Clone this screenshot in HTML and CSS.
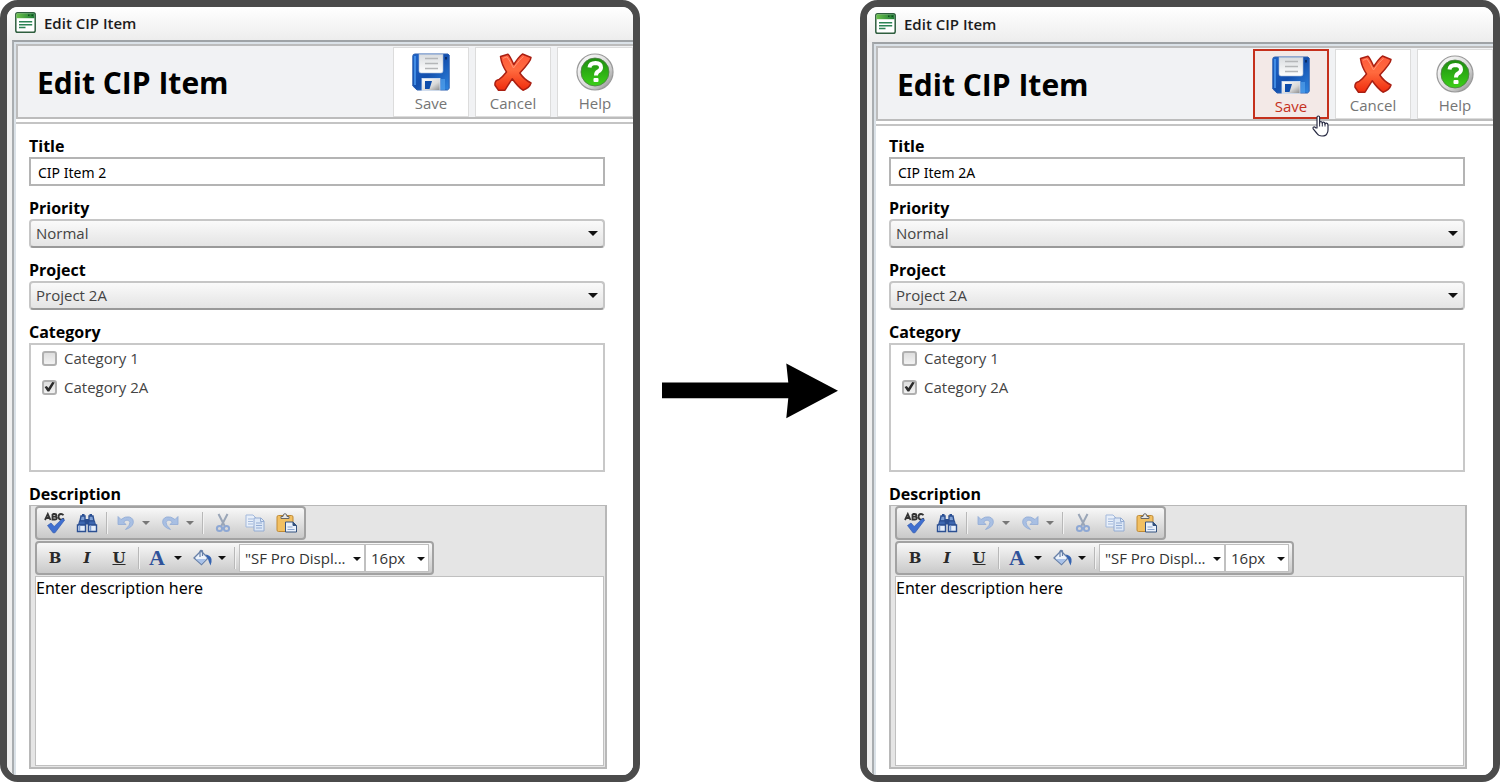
FILE: index.html
```html
<!DOCTYPE html>
<html lang="en">
<head>
<meta charset="UTF-8">
<meta name="viewport" content="width=device-width, initial-scale=1.0">
<title>Edit CIP Item</title>
<link rel="stylesheet" href="styles.css">
</head>
<body>

<!-- shared icons -->
<svg class="sprite" width="0" height="0" aria-hidden="true">
  <defs>
    <linearGradient id="g-blue" x1="0" y1="0" x2="1" y2="1">
      <stop offset="0" stop-color="#1d62c8"/><stop offset="0.5" stop-color="#1450ae"/><stop offset="1" stop-color="#2f86e0"/>
    </linearGradient>
    <linearGradient id="g-paper" x1="0" y1="0" x2="0" y2="1">
      <stop offset="0" stop-color="#d9dcdf"/><stop offset="1" stop-color="#ffffff"/>
    </linearGradient>
    <linearGradient id="g-metal" x1="0" y1="0" x2="1" y2="1">
      <stop offset="0" stop-color="#ffffff"/><stop offset="0.6" stop-color="#d8d8d8"/><stop offset="1" stop-color="#888888"/>
    </linearGradient>
    <linearGradient id="g-red" x1="0" y1="0" x2="0" y2="1">
      <stop offset="0" stop-color="#ff5a3c"/><stop offset="0.45" stop-color="#ff6a3e"/><stop offset="1" stop-color="#f02c0c"/>
    </linearGradient>
    <linearGradient id="g-green" x1="0" y1="0" x2="0" y2="1">
      <stop offset="0" stop-color="#1e8c10"/><stop offset="1" stop-color="#3cd018"/>
    </linearGradient>
    <linearGradient id="g-bar" x1="0" y1="0" x2="1" y2="0">
      <stop offset="0" stop-color="#6cc24c"/><stop offset="1" stop-color="#1c7a34"/>
    </linearGradient>
  </defs>

  <symbol id="i-form" viewBox="0 0 21 21">
    <rect x="0.8" y="0.8" width="19.4" height="19.4" rx="1.8" fill="#fff" stroke="#2f5e3e" stroke-width="1.5"/>
    <rect x="1.5" y="1.4" width="18" height="4.8" fill="url(#g-bar)"/>
    <path d="M13 3.2h1.5M16.5 3.2h1.5" stroke="#104a20" stroke-width="1.5"/>
    <path d="M4 9.8h13.2M4 12.7h13.2M4 15.6h6.5" stroke="#2c8455" stroke-width="1.5"/>
  </symbol>

  <symbol id="i-save" viewBox="0 0 38 38">
    <path d="M3 1h33l1.2 1.2v33.3L35.5 37H5L.8 33V3Q.8 1 3 1z" fill="url(#g-blue)" stroke="#2a5fb0"/>
    <path d="M3 3v29" stroke="#4f9cf0" stroke-width="1.5"/>
    <path d="M7 1.2h24V18q0 2-2 2H9q-2 0-2-2z" fill="url(#g-paper)" stroke="#a8bcd8" stroke-width="0.6"/>
    <path d="M13 5.5h13M13 10.5h13M13 15.5h13" stroke="#b4b6b8" stroke-width="1.5"/>
    <rect x="33" y="4" width="2" height="2.5" fill="#082c66"/>
    <rect x="10" y="25.500" width="18" height="12" fill="url(#g-metal)" stroke="#d8e4f4" stroke-width="0.8"/>
    <path d="M13 28h7l-2.500 8H13z" fill="#0d4cab"/>
    <path d="M29 26v11h4V26z" fill="#5aa8f0" opacity="0.6"/>
  </symbol>

  <symbol id="i-cancel" viewBox="0 0 38 38">
    <path d="M6.5 3.5 14 1.2Q16 3 19.8 11.5 24.5 4 28.5 1L37 4.5Q37 8 25.8 20 30 26.5 37 30q-1.500 5-8 7.200-4.800-3-10.800-11.400Q14 32 11 37.200H4.500L1 32.200Q.4 27.500 5 26.500 9 23.500 12.500 19 7.500 11.500 6.500 3.500z" fill="url(#g-red)" stroke="#a91f12" stroke-width="1.500" stroke-linejoin="round"/>
    <path d="M9 5.300 13 3.800Q15.500 7 19.500 15 26 6 29.500 3.500" fill="none" stroke="#ff9474" stroke-width="1"/>
  </symbol>

  <symbol id="i-help" viewBox="0 0 38 38">
    <circle cx="19" cy="19" r="18" fill="url(#g-metal)" stroke="#9a9a9a" stroke-width="1.200"/>
    <circle cx="19" cy="19" r="14" fill="url(#g-green)" stroke="#4f7a48" stroke-width="0.800"/>
    <path d="M13.500 14.500q.5-4.500 6-4.500 5.500.3 5.500 4.500 0 2.500-3 4-2 1.200-2 4" fill="none" stroke="#fff" stroke-width="4"/>
    <rect x="17.500" y="25" width="5" height="4" rx="1" fill="#fff"/>
  </symbol>

  <symbol id="i-hand" viewBox="0 0 17 22">
    <path d="M5 13V2.500Q5 1 6.300 1T7.600 2.500V8.200Q7.700 6.500 9 6.600t1.300 1.800Q10.500 7 11.700 7.200T13 9.200q.2-1.200 1.500-1 1.500.2 1.500 2V15q0 2-1 3.500-.8 2.500-5 2.500-3.500 0-5-2.500L1.200 13.800Q.6 12.300 1.800 12q1-.2 2 .9z" fill="#fff" stroke="#2a2d45" stroke-width="1.200" stroke-linejoin="round"/>
    <path d="M7.600 8v3.500M10.300 8.500v3M13 9v2.500" stroke="#2a2d45" stroke-width="1"/>
  </symbol>

  <symbol id="i-spell" viewBox="0 0 22 22">
    <path d="M1 8 3.800 2 6.500 8M2 6h3.700M8.500 2V7.500h2.300Q13 7.300 12.800 5.800 12.700 4.700 11 4.700H8.500M8.500 2h2.200q1.700 0 1.700 1.300t-1.500 1.400M19.500 3.200Q18.500 1.900 16.900 2 14.500 2.200 14.500 4.800q.1 2.700 2.600 2.800Q18.800 7.500 19.800 6.300" fill="none" stroke="#333" stroke-width="1.800"/>
    <path d="M3.500 13.500 7 11l3.200 3.500L18.500 6.500l2.200 1.500L11 20.800H9z" fill="#3f6fd0" stroke="#2c54a8" stroke-width="0.600"/>
  </symbol>

  <symbol id="i-find" viewBox="0 0 22 20">
    <path d="M5 3h4v5H4zM13 3h4l1 5h-5z" fill="#7fa0d4" stroke="#2b4f92" stroke-width="1.400"/>
    <path d="M6 1h2.500v2H6zM13.500 1H16v2h-2.500z" fill="#2b4f92"/>
    <rect x="9" y="6" width="4" height="5.500" fill="#2b4f92"/>
    <path d="M3.500 8H9l.5 4H2.500zM13 8h5.500l1 4h-7z" fill="#3d67b0" stroke="#2b4f92"/>
    <path d="M1.500 12h8v6.500h-8zM12.500 12h8v6.500h-8z" fill="#e4edfa" stroke="#2b4f92" stroke-width="1.400"/>
    <path d="M3.500 12.500v5.500M14.500 12.500v5.500" stroke="#7fa0d4" stroke-width="1.500"/>
  </symbol>

  <symbol id="i-undo" viewBox="0 0 18 18">
    <path d="M1 2.500V10.500H9L6.600 8Q9 5.500 11.300 6.300 14 7.800 12.200 11.200L8.500 15.500Q15 13.500 16.200 9.200 17 4.500 12.500 3 8 2 4 5.500z" fill="#a8bfe3" stroke="#91abd6" stroke-width="0.800"/>
  </symbol>

  <symbol id="i-cut" viewBox="0 0 16 20">
    <path d="M3.500 1 9.700 13M12.500 1 6.300 13" stroke="#9aa6b8" stroke-width="2"/>
    <circle cx="4.500" cy="15.500" r="2.600" fill="none" stroke="#8ea8d4" stroke-width="2"/>
    <circle cx="11.500" cy="15.500" r="2.600" fill="none" stroke="#8ea8d4" stroke-width="2"/>
  </symbol>

  <symbol id="i-copy" viewBox="0 0 20 18">
    <path d="M1 1h7l3 3v9H1z" fill="#e8eff9" stroke="#a3b9dc"/>
    <path d="M3 5h5M3 7.500h5M3 10h5" stroke="#a3b9dc"/>
    <path d="M9 4h7l3 3v10H9z" fill="#dce7f6" stroke="#93abd2"/>
    <path d="M15.500 4v3.500H19M11 9h6M11 11.500h6M11 14h6" fill="none" stroke="#93abd2"/>
  </symbol>

  <symbol id="i-paste" viewBox="0 0 22 20">
    <rect x="1" y="2.500" width="16" height="16" rx="1.500" fill="#f2c062" stroke="#c08a34"/>
    <path d="M5 5.500V3.500h2Q7 .7 9 .7t2 2.800h2v2z" fill="#e8e8e8" stroke="#666"/>
    <path d="M9.500 9H17l3.500 3.500V19h-11z" fill="#eaf1fb" stroke="#34527f"/>
    <path d="M17 9v3.500h3.500" fill="#34527f" stroke="#34527f"/>
    <path d="M11.500 14h5M11.500 16.500h7" stroke="#8ba6d0"/>
  </symbol>

  <symbol id="i-fill" viewBox="0 0 20 18">
    <path d="M8 2 15 9 8.500 15.500 1 9z" fill="#edf3fb" stroke="#6780a8" stroke-width="1.300"/>
    <path d="M3 10h10.500l-5 5z" fill="#a8c1e8"/>
    <path d="M7 8V2.500Q7.500.5 9.500 1.800V7" fill="none" stroke="#6780a8" stroke-width="1.200"/>
    <path d="M12.500 5.500q5 .5 6 4.500.5 3-1 6.500-1.500-3-2.500-6.500z" fill="#3764b0"/>
  </symbol>
</svg>

<div class="page">

  <section class="window">
    <div class="title-bar">
      <svg class="form-icon"><use href="#i-form"/></svg>
      <span>Edit CIP Item</span>
    </div>
    <div class="frame">
      <header class="header">
        <h1>Edit CIP Item</h1>
        <div class="actions">
          <button type="button" class="action"><svg><use href="#i-save"/></svg>Save</button>
          <button type="button" class="action"><svg><use href="#i-cancel"/></svg>Cancel</button>
          <button type="button" class="action"><svg><use href="#i-help"/></svg>Help</button>
        </div>
      </header>
      <form class="form">
        <div class="field">
          <label for="title-1">Title</label>
          <input class="text-input" id="title-1" type="text" value="CIP Item 2">
        </div>
        <div class="field">
          <label for="priority-1">Priority</label>
          <div class="dropdown">
            <select id="priority-1"><option>Normal</option></select>
          </div>
        </div>
        <div class="field">
          <label for="project-1">Project</label>
          <div class="dropdown">
            <select id="project-1"><option>Project 2A</option></select>
          </div>
        </div>
        <fieldset class="field">
          <legend>Category</legend>
          <div class="category-list">
            <label><input type="checkbox"> Category 1</label>
            <label><input type="checkbox" checked> Category 2A</label>
          </div>
        </fieldset>
        <div class="field field-editor">
          <label for="description-1">Description</label>
          <div class="editor">
            <div class="toolbar">
              <button type="button" class="tool" aria-label="Spell check"><svg width="22" height="22"><use href="#i-spell"/></svg></button>
              <button type="button" class="tool" aria-label="Find"><svg width="22" height="20"><use href="#i-find"/></svg></button>
              <span class="separator"></span>
              <button type="button" class="tool tool-split disabled" aria-label="Undo"><svg width="18" height="18"><use href="#i-undo"/></svg><i class="caret"></i></button>
              <button type="button" class="tool tool-split disabled" aria-label="Redo"><svg class="flip" width="18" height="18"><use href="#i-undo"/></svg><i class="caret"></i></button>
              <span class="separator"></span>
              <button type="button" class="tool" aria-label="Cut"><svg width="16" height="20"><use href="#i-cut"/></svg></button>
              <button type="button" class="tool" aria-label="Copy"><svg width="20" height="18"><use href="#i-copy"/></svg></button>
              <button type="button" class="tool" aria-label="Paste"><svg width="22" height="20"><use href="#i-paste"/></svg></button>
            </div>
            <div class="toolbar">
              <button type="button" class="tool letter">B</button>
              <button type="button" class="tool letter italic">I</button>
              <button type="button" class="tool letter underline">U</button>
              <span class="separator"></span>
              <button type="button" class="tool tool-split letter color">A<i class="caret"></i></button>
              <button type="button" class="tool tool-split" aria-label="Background color"><svg width="20" height="18"><use href="#i-fill"/></svg><i class="caret"></i></button>
              <span class="separator"></span>
              <div class="tool-select font-name"><select aria-label="Font name"><option>"SF Pro Displ...</option></select></div>
              <div class="tool-select font-size"><select aria-label="Font size"><option>16px</option></select></div>
            </div>
            <textarea id="description-1">Enter description here</textarea>
          </div>
        </div>
      </form>
    </div>
  </section>

  <svg class="arrow" viewBox="0 0 177 56">
    <path d="M0 19.500H127L125 .5 177 28 125 55.500 127 35.500H0z"/>
  </svg>

  <section class="window window-after">
    <div class="title-bar">
      <svg class="form-icon"><use href="#i-form"/></svg>
      <span>Edit CIP Item</span>
    </div>
    <div class="frame">
      <header class="header">
        <h1>Edit CIP Item</h1>
        <div class="actions">
          <button type="button" class="action active"><svg><use href="#i-save"/></svg>Save<svg class="pointer"><use href="#i-hand"/></svg></button>
          <button type="button" class="action"><svg><use href="#i-cancel"/></svg>Cancel</button>
          <button type="button" class="action"><svg><use href="#i-help"/></svg>Help</button>
        </div>
      </header>
      <form class="form">
        <div class="field">
          <label for="title-2">Title</label>
          <input class="text-input" id="title-2" type="text" value="CIP Item 2A">
        </div>
        <div class="field">
          <label for="priority-2">Priority</label>
          <div class="dropdown">
            <select id="priority-2"><option>Normal</option></select>
          </div>
        </div>
        <div class="field">
          <label for="project-2">Project</label>
          <div class="dropdown">
            <select id="project-2"><option>Project 2A</option></select>
          </div>
        </div>
        <fieldset class="field">
          <legend>Category</legend>
          <div class="category-list">
            <label><input type="checkbox"> Category 1</label>
            <label><input type="checkbox" checked> Category 2A</label>
          </div>
        </fieldset>
        <div class="field field-editor">
          <label for="description-2">Description</label>
          <div class="editor">
            <div class="toolbar">
              <button type="button" class="tool" aria-label="Spell check"><svg width="22" height="22"><use href="#i-spell"/></svg></button>
              <button type="button" class="tool" aria-label="Find"><svg width="22" height="20"><use href="#i-find"/></svg></button>
              <span class="separator"></span>
              <button type="button" class="tool tool-split disabled" aria-label="Undo"><svg width="18" height="18"><use href="#i-undo"/></svg><i class="caret"></i></button>
              <button type="button" class="tool tool-split disabled" aria-label="Redo"><svg class="flip" width="18" height="18"><use href="#i-undo"/></svg><i class="caret"></i></button>
              <span class="separator"></span>
              <button type="button" class="tool" aria-label="Cut"><svg width="16" height="20"><use href="#i-cut"/></svg></button>
              <button type="button" class="tool" aria-label="Copy"><svg width="20" height="18"><use href="#i-copy"/></svg></button>
              <button type="button" class="tool" aria-label="Paste"><svg width="22" height="20"><use href="#i-paste"/></svg></button>
            </div>
            <div class="toolbar">
              <button type="button" class="tool letter">B</button>
              <button type="button" class="tool letter italic">I</button>
              <button type="button" class="tool letter underline">U</button>
              <span class="separator"></span>
              <button type="button" class="tool tool-split letter color">A<i class="caret"></i></button>
              <button type="button" class="tool tool-split" aria-label="Background color"><svg width="20" height="18"><use href="#i-fill"/></svg><i class="caret"></i></button>
              <span class="separator"></span>
              <div class="tool-select font-name"><select aria-label="Font name"><option>"SF Pro Displ...</option></select></div>
              <div class="tool-select font-size"><select aria-label="Font size"><option>16px</option></select></div>
            </div>
            <textarea id="description-2">Enter description here</textarea>
          </div>
        </div>
      </form>
    </div>
  </section>

</div>

</body>
</html>
```

FILE: styles.css
```css
* {
  box-sizing: border-box;
}

body {
  margin: 0;
  background-color: #fff;
  font-family: "Open Sans", "Noto Sans", sans-serif;
  font-size: 15px;
  color: #000;
}

button,
input,
select,
textarea {
  font: inherit;
  margin: 0;
}

.sprite {
  position: absolute;
}

.page {
  display: grid;
  grid-template-columns: 32fr 11fr 32fr;
  align-items: center;
  min-height: 100vh;
}

.arrow {
  width: 80%;
  justify-self: center;
}

/* window */
.window {
  align-self: stretch;
  display: flex;
  flex-direction: column;
  min-width: 0;
  border: 7px solid #4b4b4b;
  border-radius: 18px;
  overflow: hidden;
}

.title-bar {
  display: flex;
  align-items: center;
  gap: 8px;
  height: 33px;
  padding: 0 8px 2px;
  background: linear-gradient(#fff, #ededed);
  font-size: 15px;
  font-weight: 600;
  color: #1c1c1c;
}

.window-after .title-bar {
  height: 35px;
}

.form-icon {
  width: 21px;
  height: 21px;
}

.frame {
  flex: 1;
  display: flex;
  flex-direction: column;
  margin-left: 5px;
  border-top: 2px solid #9fa3a6;
  border-left: 2px solid #a9adb0;
  box-shadow: -5px 0 0 #efefef;
  padding: 2px 0 0 2px;
  background-color: #dbe2e8;
}

.header {
  display: flex;
  align-items: center;
  justify-content: space-between;
  height: 75px;
  border: 2px solid #bcbcbc;
  border-right: 0;
  padding-left: 19px;
  background-color: #f1f2f4;
}

.header h1 {
  margin: 0;
  padding-top: 2px;
  font-size: 30px;
  line-height: 40px;
}

.actions {
  display: flex;
  gap: 6px;
}

.action {
  position: relative;
  display: flex;
  flex-direction: column;
  align-items: center;
  width: 76px;
  height: 70px;
  padding: 5px 0 0;
  border: 1px solid #dcdcdc;
  background-color: #fff;
  line-height: 24px;
  color: #757575;
}

.action svg {
  flex: none;
  width: 38px;
  height: 38px;
}

.action.active {
  border: 2px solid #c5301c;
  background-color: #f3e9e7;
  color: #c5301c;
}

.action .pointer {
  position: absolute;
  top: 64px;
  left: 57px;
  z-index: 1;
  width: 17px;
  height: 22px;
}

/* form */
.form {
  flex: 1;
  display: flex;
  flex-direction: column;
  gap: 11px;
  border-top: 3px solid #fff;
  padding: 13px 28px 6px 13px;
  background: linear-gradient(#c4c4c4, #c4c4c4) top / 100% 2px no-repeat #fff;
  background-clip: padding-box;
}

.window-after .form {
  padding-top: 11px;
}

.field {
  min-width: 0;
  margin: 0;
  border: 0;
  padding: 0;
}

.field > label,
.field > legend {
  display: block;
  padding: 0;
  font-size: 16px;
  font-weight: 700;
  line-height: 22px;
}

.text-input {
  display: block;
  width: 100%;
  height: 29px;
  border: 2px solid #b4b4b4;
  padding: 1px 7px 0;
  background-color: #fff;
  font-family: "Noto Sans", sans-serif;
  font-size: 14px;
  color: #000;
}

.dropdown,
.tool-select {
  position: relative;
}

.dropdown::after,
.tool-select::after,
.caret {
  border: 4px solid transparent;
  border-top: 4px solid #111;
  border-bottom: 0;
}

.dropdown::after,
.tool-select::after {
  content: "";
  position: absolute;
  top: 13px;
  right: 4px;
  pointer-events: none;
}

.dropdown::after {
  top: 12px;
  right: 7px;
  border-width: 5px 5px 0;
}

.dropdown select {
  display: block;
  appearance: none;
  width: 100%;
  height: 29px;
  border: 2px solid #c6c6c6;
  border-bottom-color: #999;
  border-radius: 4px;
  padding: 0 5px 2px;
  background: linear-gradient(#fafafa, #e4e4e4);
  color: #444;
}

.category-list {
  display: flex;
  flex-direction: column;
  gap: 7px;
  height: 129px;
  border: 2px solid #c8c8c8;
  padding: 2px 11px;
}

.category-list label {
  display: flex;
  align-items: center;
  gap: 7px;
  line-height: 22px;
  color: #444;
}

.category-list input {
  appearance: none;
  width: 15px;
  height: 15px;
  border: 2px solid #b0b0b0;
  border-radius: 3px;
  background: linear-gradient(#dedede, #f2f2f2);
}

.category-list input:checked::after {
  content: "";
  display: block;
  height: 11px;
  background-color: #2b2b2b;
  clip-path: polygon(5% 50%, 25% 40%, 40% 58%, 75% 5%, 98% 10%, 48% 92%, 32% 92%);
}

/* rich text editor */
.field-editor {
  flex: 1;
  display: flex;
  flex-direction: column;
  margin-right: -2px;
}

.editor {
  flex: 1;
  display: flex;
  flex-direction: column;
  align-items: flex-start;
  gap: 1px;
  border: 2px solid #b8b8b8;
  border-top-width: 1px;
  padding: 0 1px 1px 4px;
  background-color: #e5e5e5;
}

.toolbar {
  display: flex;
  align-items: center;
  height: 34px;
  border: 2px solid #a2a2a2;
  border-radius: 4px;
  padding: 0 1px 0 2px;
  background: linear-gradient(#f8f8f8, #c9c9c9);
}

.tool {
  display: flex;
  align-items: center;
  justify-content: center;
  width: 32px;
  height: 28px;
  border: 0;
  padding: 0;
  background: none;
}

.tool-split {
  justify-content: space-between;
  width: 44px;
  padding: 0 5px 0 6px;
}

.flip {
  transform: scaleX(-1);
}

.disabled .caret {
  border-top-color: #777;
}

.letter {
  font-family: "DejaVu Serif", serif;
  font-size: 15px;
  font-weight: bold;
  color: #2a2a2a;
}

.italic {
  font-style: italic;
}

.underline {
  text-decoration: underline;
}

.color {
  font-family: "Liberation Serif", serif;
  font-size: 22px;
  color: #2f529a;
}

.separator {
  width: 2px;
  height: 22px;
  margin: 0 3px;
  border-left: 1px solid #b8b8b8;
  background-color: #f2f2f2;
}

.tool-select select {
  display: block;
  appearance: none;
  width: 100%;
  height: 28px;
  border: 1px solid #c0c0c0;
  border-radius: 0;
  padding: 0 5px 1px;
  background-color: #fff;
  color: #333;
}

.font-name {
  width: 126px;
}

.font-size {
  width: 64px;
  margin-right: 2px;
}

.editor textarea {
  flex: 1;
  align-self: stretch;
  display: block;
  resize: none;
  border: 1px solid #c0c0c0;
  padding: 0;
  background-color: #fff;
  font-family: "Noto Sans", sans-serif;
  font-size: 16px;
  line-height: 22px;
  color: #000;
}
```
